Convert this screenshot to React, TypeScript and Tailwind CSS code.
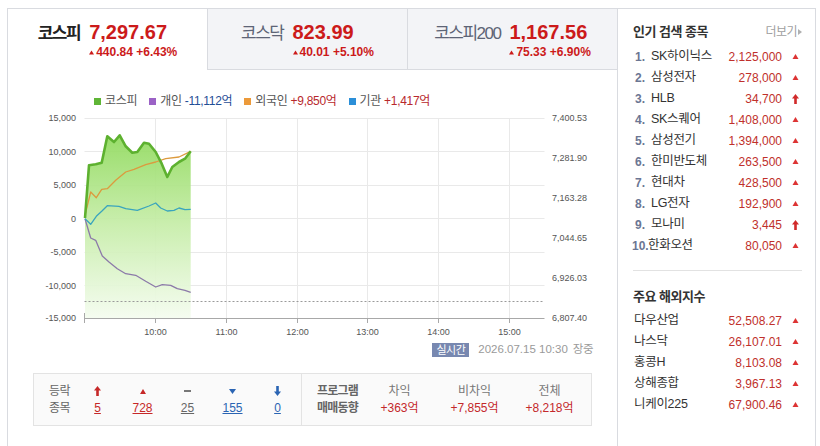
import React from "react";

type Pt = [number, number];

const kospiLine: Pt[] = [
  [84, 218], [88, 165.3], [94.7, 164.3], [100.7, 162.7], [106.3, 136.3], [113, 142],
  [118.7, 135.3], [124.7, 146.3], [131.3, 152.7], [136.3, 152], [143, 142.7], [148, 143.7],
  [154.7, 152], [160.7, 163.7], [166.3, 177], [171.3, 167], [178, 162], [184, 158.7], [189.7, 151.3],
];
const foreignLine: Pt[] = [
  [84, 215.3], [89.7, 192], [95.3, 197.7], [100.7, 189.3], [106.3, 188.7], [114.7, 180.3],
  [124.7, 172], [133, 169.3], [144.7, 164.7], [154.7, 162], [164.7, 158.7], [178, 157], [189.7, 151.3],
];
const instLine: Pt[] = [
  [84, 218.7], [89.7, 224.3], [95.3, 216.3], [100.7, 211.3], [106.3, 205.7], [118, 206.3],
  [124.7, 208.7], [136.3, 210.3], [148, 206], [154.7, 203], [159.7, 208], [166.3, 211],
  [173, 210.3], [178, 208], [184, 209.7], [189.7, 209.3],
];
const retailLine: Pt[] = [
  [84, 218.7], [89.7, 238], [94.7, 240.3], [101.3, 256], [108, 262], [116.3, 268.7],
  [124.7, 273.7], [134.7, 275.3], [144.7, 281.3], [154.7, 287], [161.3, 284.7], [169.7, 285.3],
  [176.3, 288.7], [184, 290.3], [189.7, 292.3],
];

const toPath = (pts: Pt[]) => pts.map((p, i) => (i ? "L" : "M") + p[0] + "," + p[1]).join(" ");

const gridY = [118.5, 151.5, 185.5, 218.5, 252.5, 285.5];
const leftLabels: [string, number][] = [
  ["15,000", 118], ["10,000", 151.5], ["5,000", 185], ["0", 218.5],
  ["-5,000", 252], ["-10,000", 285.5], ["-15,000", 318],
];
const rightLabels: [string, number][] = [
  ["7,400.53", 118], ["7,281.90", 158], ["7,163.28", 198],
  ["7,044.65", 238], ["6,926.03", 278], ["6,807.40", 318],
];
const hours: [string, number][] = [
  ["10:00", 154.5], ["11:00", 225.5], ["12:00", 296.5], ["13:00", 366.5], ["14:00", 437.5], ["15:00", 508.5],
];

function IndexChart() {
  const fill = toPath(kospiLine) + " L189.7,318 L84,318 Z";
  return (
    <svg width={610} height={232} viewBox="7 108 610 232" className="block">
      <defs>
        <linearGradient id="kospiFill" x1="0" y1="132" x2="0" y2="318" gradientUnits="userSpaceOnUse">
          <stop offset="0" stopColor="#8ed95a" />
          <stop offset="0.5" stopColor="#c6eda8" />
          <stop offset="1" stopColor="#f4fcef" />
        </linearGradient>
      </defs>
      {gridY.map((y) => (
        <line key={y} x1={83.5} x2={543.5} y1={y} y2={y} stroke="#e9e9e9" strokeWidth={1} />
      ))}
      {hours.map(([, x]) => (
        <line key={x} x1={x} x2={x} y1={118} y2={318} stroke="#e9e9e9" strokeWidth={1} />
      ))}
      <path d={fill} fill="url(#kospiFill)" fillOpacity={0.92} />
      <line x1={83.5} x2={543.5} y1={301.5} y2={301.5} stroke="#9a9a9a" strokeDasharray="2 2" strokeWidth={1} />
      <line x1={83.5} x2={543.5} y1={318.5} y2={318.5} stroke="#a8a8a8" strokeWidth={1} />
      <line x1={83.5} x2={83.5} y1={313} y2={323} stroke="#a8a8a8" strokeWidth={1} />
      {hours.map(([, x]) => (
        <line key={"t" + x} x1={x} x2={x} y1={318} y2={323} stroke="#a8a8a8" strokeWidth={1} />
      ))}
      <path d={toPath(retailLine)} fill="none" stroke="#8c7aa9" strokeWidth={1.3} strokeLinejoin="round" />
      <path d={toPath(instLine)} fill="none" stroke="#3aa5bd" strokeWidth={1.3} strokeLinejoin="round" />
      <path d={toPath(foreignLine)} fill="none" stroke="#dc9a3e" strokeWidth={1.3} strokeLinejoin="round" />
      <path d={toPath(kospiLine)} fill="none" stroke="#5db12f" strokeWidth={2.6} strokeLinejoin="round" />
      <g fontSize={9} fill="#555">
        {leftLabels.map(([t, y]) => (
          <text key={t} x={75} y={y + 3} textAnchor="end">{t}</text>
        ))}
        {rightLabels.map(([t, y]) => (
          <text key={t} x={551} y={y + 3}>{t}</text>
        ))}
        {hours.map(([t, x]) => (
          <text key={t} x={x} y={335} textAnchor="middle">{t}</text>
        ))}
      </g>
    </svg>
  );
}

function TriUp({ color = "#d32f2f", w = 6, h = 5 }: { color?: string; w?: number; h?: number }) {
  return (
    <svg width={w} height={h} viewBox="0 0 6 5" className="block">
      <polygon points="3,0 6,5 0,5" fill={color} />
    </svg>
  );
}

function TriDown({ color = "#2a6dc2" }: { color?: string }) {
  return (
    <svg width={7} height={5} viewBox="0 0 7 5" className="block">
      <polygon points="0,0 7,0 3.5,5" fill={color} />
    </svg>
  );
}

function ArrowUp({ color = "#d32222" }: { color?: string }) {
  return (
    <svg width={7} height={10} viewBox="0 0 7 10" className="block">
      <polygon points="3.5,0 7,4.5 0,4.5" fill={color} />
      <rect x={2.2} y={4} width={2.6} height={6} fill={color} />
    </svg>
  );
}

function ArrowDown({ color = "#2a6dc2" }: { color?: string }) {
  return (
    <svg width={7} height={10} viewBox="0 0 7 10" className="block">
      <rect x={2.2} y={0} width={2.6} height={6} fill={color} />
      <polygon points="0,5.5 7,5.5 3.5,10" fill={color} />
    </svg>
  );
}

function MarketTab({
  label, price, change, rate, active, className,
}: {
  label: string; price: string; change: string; rate: string; active?: boolean; className: string;
}) {
  return (
    <div className={className}>
      <div className="flex items-baseline justify-center pt-[11px]">
        <span
          className={
            active
              ? "text-[17px] font-bold tracking-[-1.5px] text-[#222] mr-[9px]"
              : "text-[17px] tracking-[-1.5px] text-[#5d6476] mr-[9px]"
          }
        >
          {label}
        </span>
        <div className="flex flex-col">
          <span className="text-[20px] leading-[24px] font-bold text-[#cc1a1a]">{price}</span>
          <span className="flex items-center text-[12px] leading-[15px] font-bold text-[#cc1a1a] mt-[1px]">
            <span className="mr-[2px]">
              <TriUp color="#cc1a1a" w={5} h={5} />
            </span>
            {change}&nbsp;{rate}
          </span>
        </div>
      </div>
    </div>
  );
}

const popular = [
  ["SK하이닉스", "2,125,000", "up"],
  ["삼성전자", "278,000", "up"],
  ["HLB", "34,700", "limit"],
  ["SK스퀘어", "1,408,000", "up"],
  ["삼성전기", "1,394,000", "up"],
  ["한미반도체", "263,500", "up"],
  ["현대차", "428,500", "up"],
  ["LG전자", "192,900", "up"],
  ["모나미", "3,445", "limit"],
  ["한화오션", "80,050", "up"],
];

const overseas = [
  ["다우산업", "52,508.27"],
  ["나스닥", "26,107.01"],
  ["홍콩H", "8,103.08"],
  ["상해종합", "3,967.13"],
  ["니케이225", "67,900.46"],
];

function SidePanel() {
  return (
    <div className="w-[199px] h-[438px] border border-b-0 border-[#d9dbe0] bg-white flex flex-col">
      <div className="flex items-center justify-between pl-[15px] pr-[13px] pt-[14px] h-[32px]">
        <span className="text-[13px] leading-[18px] font-bold text-[#333] tracking-[-0.5px]">인기 검색 종목</span>
        <span className="flex items-center text-[12px] text-[#a0a0a0] tracking-[-0.5px]">
          더보기
          <svg width={4} height={6} viewBox="0 0 4 6" className="ml-[1px]">
            <polygon points="0,0 4,3 0,6" fill="#b0b0b0" />
          </svg>
        </span>
      </div>
      <div className="mt-[5px] pl-[15px] pr-[10px]">
        {popular.map(([name, price, kind], i) => (
          <div key={name} className="flex items-center h-[21px]">
            <span
              className={
                i === 9
                  ? "ml-[-1px] w-[16px] text-[12px] font-bold text-[#6b7693]"
                  : "ml-[2px] w-[16px] text-[12px] font-bold text-[#6b7693]"
              }
            >
              {i + 1}.
            </span>
            <span className="flex-1 text-[12.5px] text-[#333] tracking-[-0.3px]">{name}</span>
            <span className="text-[12px] text-[#c0302b] pr-[3px]">{price}</span>
            <span className="w-[20px] flex justify-center">
              {kind === "limit" ? <ArrowUp color="#d12a2a" /> : <TriUp color="#d33" w={7} h={5} />}
            </span>
          </div>
        ))}
      </div>
      <div className="mt-[14px] ml-[15px] mr-[13px] border-t border-[#e2e2e2]" />
      <div className="mt-[17px] pl-[15px] h-[18px] text-[13px] leading-[18px] font-bold text-[#333] tracking-[-0.5px]">
        주요 해외지수
      </div>
      <div className="mt-[4px] pl-[16px] pr-[10px]">
        {overseas.map(([name, price]) => (
          <div key={name} className="flex items-center h-[21px]">
            <span className="flex-1 text-[12.5px] text-[#333] tracking-[-0.3px]">{name}</span>
            <span className="text-[12px] text-[#c0302b] pr-[3px]">{price}</span>
            <span className="w-[20px] flex justify-center">
              <TriUp color="#d33" w={7} h={5} />
            </span>
          </div>
        ))}
      </div>
    </div>
  );
}

function LegendItem({ color, label, value, valueClass }: { color: string; label: string; value?: string; valueClass?: string }) {
  return (
    <span className="flex items-center">
      <span className="w-[7px] h-[7px] mr-[4px]" style={{ backgroundColor: color }} />
      <span className="text-[#555]">{label}</span>
      {value ? <span className={valueClass}>{value}</span> : null}
    </span>
  );
}

function BreadthCell({ icon, value, valueClass }: { icon: React.ReactNode; value: string; valueClass: string }) {
  return (
    <div className="w-[45px] flex flex-col items-center">
      <div className="h-[17px] flex items-center justify-center">{icon}</div>
      <span className={valueClass}>{value}</span>
    </div>
  );
}

function ProgramCell({ label, value }: { label: string; value: string }) {
  return (
    <div className="w-[75px] flex flex-col items-center">
      <span className="h-[17px] leading-[17px] text-[#777]">{label}</span>
      <span className="h-[17px] leading-[17px] text-[#c4282b]">{value}</span>
    </div>
  );
}

export default function App() {
  return (
    <div className="w-[820px] h-[446px] overflow-hidden bg-white font-['Liberation_Sans','Noto_Sans_CJK_KR',sans-serif]">
      <div className="flex pt-[8px] pl-[7px]">
        <div className="w-[610px] h-[438px] border-l border-[#d9dbe0] flex flex-col">
          <div className="flex h-[62px]">
            <MarketTab
              active
              label="코스피"
              price="7,297.67"
              change="440.84"
              rate="+6.43%"
              className="w-[199px] h-[62px] border-t border-[#d9dbe0] bg-white"
            />
            <MarketTab
              label="코스닥"
              price="823.99"
              change="40.01"
              rate="+5.10%"
              className="w-[200px] h-[62px] border-t border-l border-b border-[#d9dbe0] bg-[#f3f4f7]"
            />
            <MarketTab
              label="코스피200"
              price="1,167.56"
              change="75.33"
              rate="+6.90%"
              className="flex-1 h-[62px] border-t border-l border-b border-[#d9dbe0] bg-[#f3f4f7]"
            />
          </div>

          <div className="h-[38px] pt-[23px] pl-[86px]">
            <div className="flex items-center gap-[12px] h-[16px] text-[12px] tracking-[-0.3px]">
              <LegendItem color="#5fb536" label="코스피" />
              <LegendItem color="#9b62c6" label="개인" value=" -11,112억" valueClass="text-[#1f4e96] whitespace-pre" />
              <LegendItem color="#ec9a3a" label="외국인" value=" +9,850억" valueClass="text-[#b8282c] whitespace-pre" />
              <LegendItem color="#2b8fd8" label="기관" value=" +1,417억" valueClass="text-[#b8282c] whitespace-pre" />
            </div>
          </div>

          <IndexChart />

          <div className="mt-[3px] h-[14px] flex items-center justify-end pr-[24px] text-[11.5px]">
            <span className="h-[14px] px-[4px] bg-[#7888b0] text-white leading-[14px] text-[11px] tracking-[-0.5px]">실시간</span>
            <span className="ml-[9px] text-[#9a9a9a]">2026.07.15 10:30</span>
            <span className="ml-[5px] text-[#9a9a9a] tracking-[-0.5px]">장중</span>
          </div>

          <div className="mt-[16px] ml-[25px] mr-[25px] h-[53px] border border-[#e3e3e3] bg-[#fafafa] flex text-[12px]">
            <div className="w-[267px] flex items-center pl-[15px]">
              <div className="w-[26px] flex flex-col text-[#666] leading-[17px] tracking-[-0.5px]">
                <span>등락</span>
                <span>종목</span>
              </div>
              <BreadthCell icon={<ArrowUp color="#c62828" />} value="5" valueClass="leading-[17px] text-[#c62828] underline" />
              <BreadthCell icon={<TriUp color="#c62828" />} value="728" valueClass="leading-[17px] text-[#c62828] underline" />
              <BreadthCell icon={<span className="block w-[7px] h-[2px] bg-[#777]" />} value="25" valueClass="leading-[17px] text-[#666] underline" />
              <BreadthCell icon={<TriDown color="#2a64b3" />} value="155" valueClass="leading-[17px] text-[#2a64b3] underline" />
              <BreadthCell icon={<ArrowDown color="#2a64b3" />} value="0" valueClass="leading-[17px] text-[#2a64b3] underline" />
            </div>
            <div className="flex-1 border-l border-[#e3e3e3] flex items-center pl-[15px]">
              <div className="w-[45px] flex flex-col font-bold text-[#666] leading-[17px] tracking-[-0.8px]">
                <span>프로그램</span>
                <span>매매동향</span>
              </div>
              <ProgramCell label="차익" value="+363억" />
              <ProgramCell label="비차익" value="+7,855억" />
              <ProgramCell label="전체" value="+8,218억" />
            </div>
          </div>
        </div>
        <SidePanel />
      </div>
    </div>
  );
}
